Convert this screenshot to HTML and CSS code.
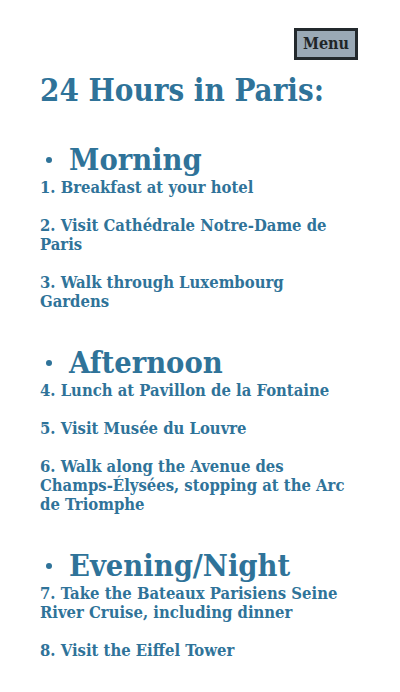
FILE: index.html
```html
<!DOCTYPE html>
<html>
<head>
<meta charset="utf-8">
<link rel="stylesheet" href="styles.css">
</head>
<body>
<header class="top">
  <button class="menu">Menu</button>
</header>
<main class="content">
  <h1 class="title">24 Hours in Paris:</h1>
  <section class="part">
    <h2 class="part-title"><span class="dot"></span>Morning</h2>
    <p class="item">1. Breakfast at your hotel</p>
    <p class="item">2. Visit Cathédrale Notre-Dame de Paris</p>
    <p class="item">3. Walk through Luxembourg Gardens</p>
  </section>
  <section class="part">
    <h2 class="part-title"><span class="dot"></span>Afternoon</h2>
    <p class="item">4. Lunch at Pavillon de la Fontaine</p>
    <p class="item">5. Visit Musée du Louvre</p>
    <p class="item">6. Walk along the Avenue des Champs-Élysées, stopping at the Arc de Triomphe</p>
  </section>
  <section class="part">
    <h2 class="part-title"><span class="dot"></span>Evening/Night</h2>
    <p class="item">7. Take the Bateaux Parisiens Seine River Cruise, including dinner</p>
    <p class="item">8. Visit the Eiffel Tower</p>
  </section>
</main>
</body>
</html>
```
FILE: styles.css
```css
html, body {
  margin: 0;
  padding: 0;
  background: #ffffff;
}
body {
  font-family: "DejaVu Serif", serif;
  font-stretch: condensed;
  font-weight: bold;
  color: #2f7399;
}
.top {
  display: flex;
  justify-content: flex-end;
  padding: 28px 42px 0 0;
}
.menu {
  font-family: "DejaVu Serif", serif;
  font-stretch: condensed;
  font-weight: bold;
  font-size: 16px;
  line-height: 20px;
  color: #1f2528;
  background: #9aa9b6;
  border: 3px solid #23292d;
  padding: 3px 6px;
  margin: 0;
  height: 32px;
}
.content {
  padding: 0 48px 0 40px;
}
.title {
  font-size: 31px;
  line-height: 36px;
  margin: 12px 0 35px;
}
.part {
  margin-bottom: 35px;
}
.part-title {
  font-size: 30.5px;
  line-height: 32px;
  margin: 0 0 3px;
  display: flex;
  align-items: center;
}
.dot {
  width: 6px;
  height: 6px;
  border-radius: 50%;
  background: #2f7399;
  margin: 2px 17px 0 6px;
  flex: none;
}
.item {
  font-size: 16.5px;
  line-height: 19px;
  margin: 0 0 19px;
}
.item:last-child {
  margin-bottom: 0;
}
```
